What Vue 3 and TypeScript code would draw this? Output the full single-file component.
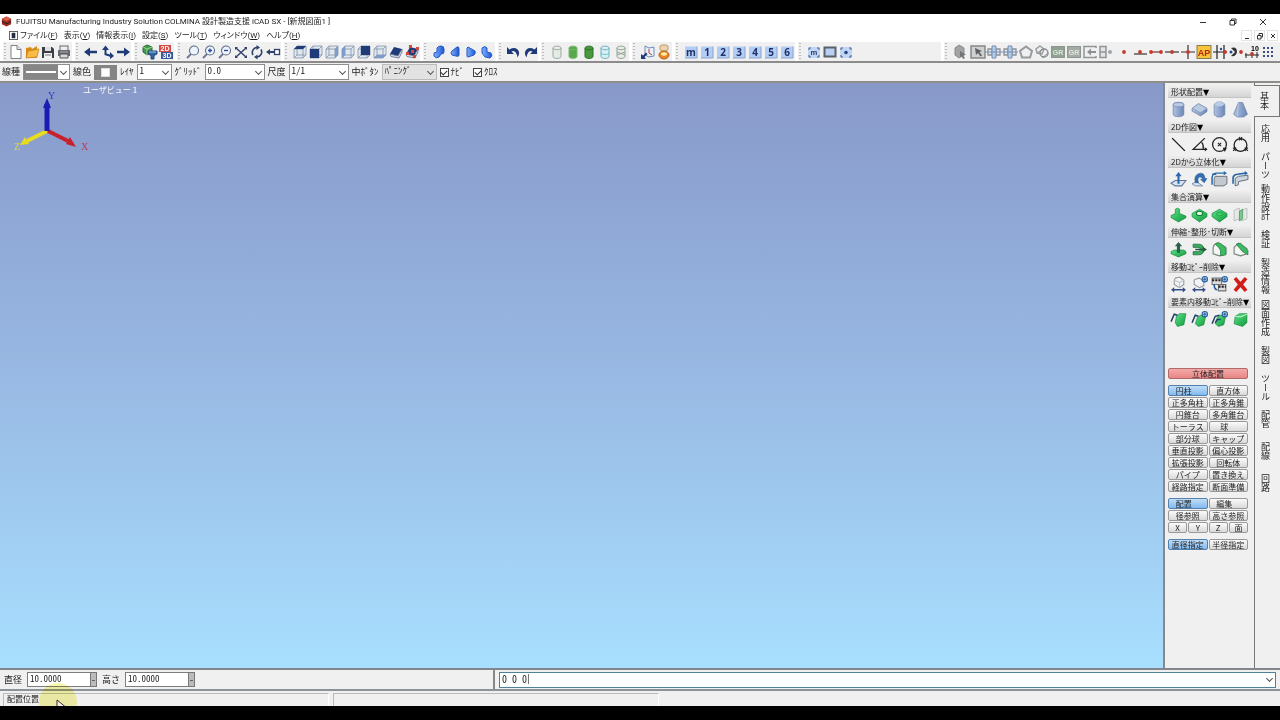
<script setup lang="ts">
import { ref } from 'vue'

const NAVY = '#1f3a78'
const RED = '#c8392b'

const cube = (part: string) => {
  const faces: Record<string, string> = {
    top: '2,5 5,2 14,2 11,5',
    front: '2,5 11,5 11,14 2,14',
    right: '11,5 14,2 14,11 11,14',
    left: '2,5 5,2 5,11 2,14',
    back: '5,2 14,2 14,11 5,11',
    bottom: '2,14 5,11 14,11 11,14',
  }
  const dark = part === 'right' || part === 'left' || part === 'bottom' ? '#7d9ccb' : NAVY
  return `<path d="M2 5L5 2H14V11L11 14H2Z" fill="#dfe8f1"/><path d="M2 5H11V14H2ZM2 5L5 2H14V11L11 14M11 5L14 2M5 2V11H14M5 11L2 14" fill="none" stroke="#8492a8" stroke-width=".8"/><polygon points="${faces[part]}" fill="${dark}"/>`
}
const lens = (inner: string) =>
  `<path d="M6.2 9.8L2 14" stroke="#66708a" stroke-width="1.8"/><circle cx="9" cy="6.5" r="4.5" fill="#eef4fb" stroke="#5c6b88" stroke-width="1.1"/>${inner}`
const cylinder = (fill: string, edge: string, extra = '') =>
  `<path d="M4 4V12.5C4 15 12 15 12 12.5V4C12 1.500 4 1.500 4 4Z" fill="${fill}" stroke="${edge}"/><path d="M4 4C4 6.300 12 6.300 12 4" fill="none" stroke="${edge}"/>${extra}`
const tile = (t: string) =>
  `<rect x="2" y="2.500" width="12" height="11.500" fill="#b4cdf6"/><path d="M2 14H14V2.500" fill="none" stroke="#8aa2cc"/><text x="8" y="12" text-anchor="middle" font-size="10" font-weight="700" font-family="Open Sans, Noto Sans, sans-serif" fill="#1d3168">${t}</text>`
const dot = (x: number, y = 8) => `<circle cx="${x}" cy="${y}" r="1.900" fill="${RED}"/>`
const frame = (inner: string) =>
  `<rect x="2" y="3" width="12" height="11" fill="#c2d5f2"/><path d="M3 6V4H5M11 4H13V6M13 11V13H11M5 13H3V11" fill="none" stroke="#46659c"/>${inner}`
const grLabel = (bg: string) =>
  `<rect x="1.500" y="2.500" width="13" height="11" fill="${bg}" stroke="#8e968e"/><text x="8" y="11" text-anchor="middle" font-size="7" font-weight="700" font-family="Liberation Sans, sans-serif" fill="#dfe6df">GR</text>`
const snapBox = `<path d="M2 5H6V11H2ZM10 5H14V11H10Z" fill="#e4e8ec" stroke="#8b9097" stroke-width="1.300"/><path d="M6 2H10V14H6Z" fill="#b5cce8" stroke="#7890b3"/><path d="M0 8H16" stroke="#7890b3"/>`

const icons: Record<string, string> = {
  file: '<path d="M3 1.500H9L13 5.500V14.500H3Z" fill="#fff" stroke="#7b7f86"/><path d="M9 1.500V5.500H13" fill="#e5e7ea" stroke="#7b7f86"/>',
  open: '<path d="M2 14V4L7 3L8 5L13 2V14Z" fill="#d98b16"/><path d="M2 14L4 7L15 5L13 13Z" fill="#f8bb45" stroke="#c87d15" stroke-width=".7"/>',
  save: '<path d="M2 3H12L14 5V14H2Z" fill="#3d3e43"/><rect x="5" y="3" width="6" height="4" fill="#dde0e6"/><rect x="4" y="9" width="8" height="5" fill="#f1f2f3"/><path d="M5 11H11" stroke="#777"/>',
  print: '<rect x="4" y="2" width="8" height="5" fill="#eee" stroke="#666"/><path d="M2 6H14V12H2Z" fill="#696b70"/><path d="M4 10H12V14H4Z" fill="#d8d8d8" stroke="#555"/><path d="M4 8H12" stroke="#aaa"/>',
  left: `<path d="M1 8L7 3.500V6.800H14V9.200H7V12.500Z" fill="${NAVY}"/>`,
  axes: `<path d="M5.500 11V6H3L6.500 1.500L10 6H7.500V9.500L11 10.500V8L15 12L11 15V12.700Z" fill="${NAVY}"/>`,
  right: `<path d="M15 8L9 3.500V6.800H2V9.200H9V12.500Z" fill="${NAVY}"/>`,
  parts: '<path d="M5 1L10 3V8L5 11L1 8V3Z" fill="#439a49" stroke="#2a6d36"/><path d="M1 3L5 5L10 3M5 5V11" fill="none" stroke="#9bd39a"/><path d="M6 7H15V10L12 11.500V15H9V11.500L6 10Z" fill="#35669c" stroke="#234a7b"/><path d="M7 8H14" stroke="#9cc2e5"/>',
  dim: '<rect x="1" y="1" width="12" height="7" fill="#d94a42"/><rect x="3" y="8" width="12" height="7" fill="#365a9e"/><text x="7" y="7.200" text-anchor="middle" font-size="7" font-weight="700" font-family="Liberation Sans, sans-serif" fill="#fff">2D</text><text x="9" y="14.200" text-anchor="middle" font-size="7" font-weight="700" font-family="Liberation Sans, sans-serif" fill="#fff">3D</text>',
  zoom: lens(''),
  zoomIn: lens('<path d="M7 6.500H11M9 4.500V8.500" stroke="#24499a" stroke-width="1.300"/>'),
  zoomOut: lens('<path d="M7 6.500H11" stroke="#24499a" stroke-width="1.300"/>'),
  fit: '<path d="M3 4L13 13M13 4L3 13" stroke="#34466e" stroke-width="1.500"/><path d="M2 3H5L2 6ZM14 3V6L11 3ZM2 14V11L5 14ZM14 14H11L14 11Z" fill="#34466e"/>',
  rotate: '<path d="M4 11A5 5 0 0 1 8 3.500M12 5.500A5 5 0 0 1 8 13" fill="none" stroke="#30416a" stroke-width="1.600"/><path d="M7.500 1L11 3.500L7.500 6ZM8.500 10.500V15.500L5 13Z" fill="#30416a"/>',
  pan: '<path d="M1 8L5 5V7H9V9H5V11Z" fill="#30416a"/><rect x="9.500" y="5.500" width="5" height="5" fill="#fff" stroke="#30416a" stroke-width="1.300"/>',
  cTop: cube('top'), cFront: cube('front'), cRight: cube('right'), cLeft: cube('left'), cBack: cube('back'), cBottom: cube('bottom'),
  cTilt: `<path d="M6 3L14 5L10 12L2 10Z" fill="${NAVY}"/><path d="M2 10L10 12L14 5V8L11 14L3 12.500Z" fill="#dae3ee" stroke="#5b6984" stroke-width=".8"/>`,
  cPoints: `<path d="M6 3L14 5L10 12L2 10Z" fill="${NAVY}"/><path d="M2 10L10 12L14 5V8L11 14L3 12.500Z" fill="#dae3ee" stroke="#5b6984" stroke-width=".8"/><path d="M5 1h3v3h-3zM12 3h3v3h-3zM2 8h3v3h-3zM9 11h3v3h-3zM7 6h3v3h-3z" fill="#d9473c"/>`,
  s1: '<path d="M6 4Q7 2 10 2Q13 2 13 5V8Q13 10 10 10L8 13Q5 15 3 12V9L6 8Z" fill="url(#solidBlue)" stroke="#2459c4"/>',
  s2: '<path d="M10 3Q12 2 12 5V11Q12 13 9 12L5 11Q3 9 5 7Z" fill="url(#solidBlue)" stroke="#2459c4"/>',
  s3: '<path d="M5 3L12 7Q13 9 11 11L5 13Q4 13 4 12V4Z" fill="url(#solidBlue)" stroke="#2459c4"/>',
  s4: '<path d="M3 4Q6 1 8 4V8L12 9Q14 12 11 14L6 13L3 9Z" fill="url(#solidBlue)" stroke="#2459c4"/>',
  undo: `<path d="M1 3V10H8L5.500 7.500Q10 5.500 11.500 13.500Q15 8 11 5Q8 3 3.500 5.500Z" fill="${NAVY}"/>`,
  redo: `<path d="M15 3V10H8L10.500 7.500Q6 5.500 4.500 13.500Q1 8 5 5Q8 3 12.500 5.500Z" fill="${NAVY}"/>`,
  y1: cylinder('#e5ece4', '#9aa99b'),
  y2: cylinder('#58a94b', '#7cb872'),
  y3: cylinder('#47993b', '#2f6e2c'),
  y4: cylinder('#d6f1f4', '#74aebc', '<path d="M4 9C4 11 12 11 12 9" fill="none" stroke="#63c4d6"/>'),
  y5: cylinder('#e8ede8', '#92a295', '<path d="M4 8L12 11M4 11L12 8" stroke="#92a295"/>'),
  view: `<path d="M5 2L9 4L14 3V12L9 13L5 11Z" fill="#e8f0fa" stroke="#6f8cb9"/><path d="M9 5V9L12 11" stroke="${RED}" fill="none"/><path d="M1 15V10L3 11.500L6 8.500L7.500 10L4.500 13L6 15Z" fill="${NAVY}"/>`,
  coin: '<rect x="4" y="1" width="8" height="6" rx="2" fill="#ecd5ae" stroke="#bf9b68"/><ellipse cx="8" cy="11" rx="5" ry="4" fill="#e98621" stroke="#b95d1d"/><ellipse cx="8" cy="10" rx="3" ry="1.700" fill="#fff0a5"/>',
  tm: tile('m'), t1: tile('1'), t2: tile('2'), t3: tile('3'), t4: tile('4'), t5: tile('5'), t6: tile('6'),
  fm: frame('<text x="8" y="10.500" text-anchor="middle" font-size="7" font-weight="700" font-family="Noto Sans, sans-serif" fill="#29477d">m</text>'),
  fw: '<rect x="2.500" y="3.500" width="11" height="9" fill="#b9d0f2" stroke="#59616c" stroke-width="2"/>',
  fd: frame('<circle cx="8" cy="8.500" r="1.800" fill="#244783"/>'),
  gCube: '<path d="M7 1L12 4V11L7 14L3 11V4Z" fill="#a1a3a4" stroke="#858789"/><path d="M8 7L14 11L11 11.500L13 14L11 15L9.500 12L8 13Z" fill="#727476"/>',
  pick: '<rect x="1" y="2" width="14" height="12" fill="#cfd0d1" stroke="#86888a" stroke-width="1.500"/><path d="M5 4L12 7L9.500 8L12 11.500L10.500 12.500L8 9L6 11Z" fill="#5e6062"/>',
  gBox: snapBox,
  penta: '<path d="M8 2.500L14 7L12 13.500H4L2 7Z" fill="none" stroke="#969a9e" stroke-width="2"/>',
  links: '<path d="M6 2L10 5L8 10L3 9L2 5Z" fill="none" stroke="#9b9ea1" stroke-width="1.500"/><circle cx="10" cy="9" r="4" fill="none" stroke="#8b8f92" stroke-width="1.500"/><path d="M3 9L9 5M8 14L14 9" stroke="#8b8f92"/>',
  gr1: grLabel('#8ea08f'), gr2: grLabel('#a5aaa7'),
  gIn: '<path d="M14 4V2.500H2V13.500H14V12" stroke="#919598" fill="none" stroke-width="1.500"/><path d="M5 8L9 4.500V7H14V9H9V11.500Z" fill="#8d9194"/>',
  gEnd: '<path d="M2 2.500H8V13.500H2ZM2 8H8" stroke="#919598" fill="#e4e4e4" stroke-width="1.500"/><circle cx="12" cy="8" r="2" fill="#a1a5a9"/>',
  p1: dot(8), p2: `<path d="M2 10H15" stroke="#333" stroke-width="1.200"/>${dot(8)}`,
  p3: `<path d="M2 8H14" stroke="#733" stroke-width="1.200"/>${dot(3)}${dot(13)}`,
  p4: `<path d="M1 8H15" stroke="#333" stroke-width="1.200"/>${dot(8)}`,
  p5: `<path d="M1 8H15M8 1V15" stroke="#333" stroke-width="1.200"/>${dot(8)}`,
  ap: '<rect x="1" y="1.500" width="14" height="13" fill="#f8c43b" stroke="#887a55"/><text x="8" y="12" text-anchor="middle" font-size="9" font-weight="700" font-family="Liberation Sans, sans-serif" fill="#b32516">AP</text>',
  p6: `<path d="M1 8H15M5 1V15M12 1V15" stroke="#222" stroke-width="1.200"/><circle cx="9" cy="5" r="1.200" fill="#264b91"/>${dot(13)}`,
  p7: `<path d="M3 4Q9 2 9 8Q8 13 3 12L7 8Z" fill="#333"/><circle cx="3" cy="8" r="1.500" fill="#244b8c"/>${dot(13)}`,
  p8: `<path d="M1 11H15M2 9V14M8 8V14M13 8V14" stroke="#222"/><text x="11" y="7" text-anchor="middle" font-size="7" font-weight="700" font-family="Liberation Sans, sans-serif">10</text>${dot(8, 10)}`,
  p9: '<path d="M3 3h2v2H3zM7 3h2v2H7zM11 3h2v2h-2zM3 7h2v2H3zM7 7h2v2H7zM11 7h2v2h-2zM3 11h2v2H3zM7 11h2v2H7zM11 11h2v2h-2z" fill="#3d4f7c"/>',

  kCyl: '<path d="M3 3.500V12.500C3 15.500 13 15.500 13 12.500V3.500C13 .500 3 .500 3 3.500Z" fill="url(#steel)" stroke="#6d83a6" stroke-width=".7"/><ellipse cx="8" cy="3.500" rx="5" ry="2" fill="#b9cbe6" stroke="#6d83a6" stroke-width=".6"/>',
  kBox: '<path d="M1 7L7 2.500L15 7V10L9 14L1 9.500Z" fill="url(#steel)" stroke="#6d83a6" stroke-width=".7"/><path d="M1 7L7 2.500L15 7L9 11Z" fill="#bacbe5" stroke="#7388ab" stroke-width=".5"/>',
  kPrism: '<path d="M3 3L6 1H10L13 3V13L10 15H6L3 13Z" fill="url(#steel)" stroke="#6d83a6" stroke-width=".7"/><path d="M3 3L6 1H10L13 3L10 5H6Z" fill="#b9cbe6"/>',
  kCone: '<path d="M6 1.500H10L14.500 12.500L11 15H5L1.500 12.500Z" fill="url(#steel)" stroke="#6d83a6" stroke-width=".7"/><path d="M6 2L5 14.500" stroke="#c5d3ea" stroke-width=".7"/>',
  line: '<path d="M2 2L14 14" stroke="#222" stroke-width="1.300"/>',
  angle: '<path d="M13 2L2 12.500H15M10 6Q12 8 11.500 12" fill="none" stroke="#222" stroke-width="1.200"/><path d="M13 10.500L15.500 12.500L13 14.500Z" fill="#222"/>',
  circ: '<circle cx="8" cy="8" r="6.500" fill="none" stroke="#222" stroke-width="1.200"/><path d="M6.500 6.500L9.500 9.500M9.500 6.500L6.500 9.500" stroke="#222"/><path d="M11 11L15 11L13 15Z" fill="#222"/>',
  circ3: '<circle cx="8" cy="8.500" r="6" fill="none" stroke="#222" stroke-width="1.200"/><path d="M6.500 1L9.500 4M9.500 1L6.500 4M1 11L4 14M4 11L1 14M12 11L15 14M15 11L12 14" stroke="#222"/>',
  extr: '<path d="M1 11.500L5 9H15L11 14H5Z" fill="#d6e5f5" stroke="#5f7794"/><path d="M8 1L11 5H9V12H7V5H5Z" fill="#2a68b0"/>',
  revol: '<path d="M1 12L5 10L11 14H4Z" fill="#d6e5f5" stroke="#5f7794" stroke-width=".7"/><path d="M4 11Q2 3 9 2Q13 2 13 7L15 7L12.500 11L9 8H11Q10 5 7 6Q6 8 7 11Z" fill="#326eb4" stroke="#28558d" stroke-width=".5"/>',
  sheet: '<path d="M4 5H15V12L12 14H3V7Z" fill="#c4c9ce" stroke="#59626c" stroke-width=".8"/><path d="M1 13V6Q2 2 5 2H13M1 3H5" fill="none" stroke="#2567a8" stroke-width="1.400"/><path d="M12 0L15 2L12 4Z" fill="#2567a8"/>',
  sheet2: '<path d="M3 7L6 5L15 4V8L6 10V13L3 14Z" fill="#cdd6de" stroke="#4e6073" stroke-width=".8"/><path d="M1 12V6Q2 3 5 3L13 2" fill="none" stroke="#2567a8" stroke-width="1.500"/><path d="M12 0L15 2L12 4Z" fill="#2567a8"/>',
  uni: '<path d="M5 3Q7 1 9 3V7L15 9.500V11L8 15L1 11V9L5 7Z" fill="url(#solidGreen)" stroke="#128338" stroke-width=".6"/>',
  sub: '<path d="M1 7L8 3L15 7V10L8 15L1 10Z" fill="url(#solidGreen)" stroke="#128338" stroke-width=".6"/><ellipse cx="8" cy="7" rx="3" ry="2" fill="#e5f3e8" stroke="#128338"/>',
  inter: '<path d="M1 7L8 3L15 7V10L8 15L1 10Z" fill="url(#solidGreen)" stroke="#128338" stroke-width=".6"/><ellipse cx="8" cy="7.500" rx="3" ry="1.500" fill="#3dd368" stroke="#168b3c" stroke-width=".5"/>',
  split: '<path d="M2 4L7 2V12L2 14ZM9 4L14 2V12L9 14Z" fill="#e6e9e6" stroke="#b5bab7" stroke-width=".8"/><path d="M7 5L10 3V12L7 14Z" fill="#7ac790" stroke="#559b69" stroke-width=".8"/>',
  stretch: '<path d="M1 10L4 8.500H13L15 10V12L8 15L1 12Z" fill="url(#solidGreen)" stroke="#167c35" stroke-width=".6"/><path d="M8 1L11.500 5H9.500V11H6.500V5H4.500Z" fill="#28624a"/>',
  shape: '<path d="M2 3H7Q12 3 12 8Q12 13 7 13H2V10H6Q9 10 9 8Q9 6 6 6H2Z" fill="#35ad5a" stroke="#286343" stroke-width=".7"/><path d="M4 8H11" stroke="#245a3c" stroke-width="1.400"/><path d="M11 5.500L15 8L11 10.500Z" fill="#245a3c"/>',
  fillet: '<path d="M2 6Q3 2 7 2L14 6V12L8 14L2 12Z" fill="#f4f6f4" stroke="#778079"/><path d="M4 3Q7 0 11 4L14 7V13L9 14V9Q8 6 4 3Z" fill="#39bd61" stroke="#2c7642" stroke-width=".7"/>',
  chamfer: '<path d="M2 6L6 2L14 7V12L8 14L2 12Z" fill="#f4f6f4" stroke="#778079"/><path d="M4 3L8 2L15 9V13L10 10Z" fill="#39bd61" stroke="#2c7642" stroke-width=".7"/>',
  move: '<path d="M5 2L9 1L13 4V8L9 11L4 8V4Z" fill="#f2f3f4" stroke="#92979d"/><path d="M4 4L9 6L13 4M9 6V11" fill="none" stroke="#c2c5c8"/><path d="M1 13L4 10.500V12.300H12V10.500L15 13L12 15.500V13.700H4V15.500Z" fill="#334c87"/>',
  copy: '<path d="M4 3L8 2L12 5V9L8 11L3 8V4Z" fill="#f2f3f4" stroke="#92979d"/><path d="M1 13L4 10.500V12.300H11V10.500L14 13L11 15.500V13.700H4V15.500Z" fill="#334c87"/><circle cx="13" cy="3" r="2.500" fill="#b8d8f1" stroke="#235d9b"/><path d="M11.500 3H14.500M13 1.500V4.500" stroke="#235d9b"/>',
  multi: '<path d="M1 2H10V8H1ZM7 8H14V14H7Z" fill="#ddd" stroke="#6f7275"/><path d="M1 4H10M7 10H14" stroke="#222" stroke-dasharray="2 1" stroke-width="2"/><path d="M3 8Q3 13 6 13" fill="none" stroke="#25549a" stroke-width="1.500"/><circle cx="13" cy="3" r="2.500" fill="#b8d8f1" stroke="#235d9b"/><path d="M11.500 3H14.500M13 1.500V4.500" stroke="#235d9b"/>',
  del: '<path d="M1.500 3L4 1L8 5.500L12 1L14.500 3L10.500 8L14.500 13L12 15L8 10.500L4 15L1.500 13L5.500 8Z" fill="#cf1e1a"/>',
  m1: '<path d="M6 5L9 2.500H15L13 13L7 14.500L5 11Z" fill="url(#solidGreen)" stroke="#158239" stroke-width=".6"/><path d="M1 10L4 3L7 4" fill="none" stroke="#213d66" stroke-width="1.400"/>',
  m2: '<path d="M6 6L9 4H14L12 13L7 14.500L4 12Z" fill="url(#solidGreen)" stroke="#158239" stroke-width=".6"/><path d="M1 11L4 4L7 5" fill="none" stroke="#213d66" stroke-width="1.400"/><circle cx="13" cy="3" r="2.500" fill="#b8d8f1" stroke="#235d9b"/><path d="M11.500 3H14.500M13 1.500V4.500" stroke="#235d9b"/>',
  m3: '<path d="M6 6L9 4H14L12 13L7 14.500L4 12Z" fill="url(#solidGreen)" stroke="#158239" stroke-width=".6"/><path d="M1 12L4 5L8 4M4 11L6 8H9" fill="none" stroke="#213d66" stroke-width="1.400"/><circle cx="13" cy="3" r="2.500" fill="#b8d8f1" stroke="#235d9b"/><path d="M11.500 3H14.500M13 1.500V4.500" stroke="#235d9b"/>',
  m4: '<path d="M3 5L7 2.500H14V11L10 14.500L2 12Z" fill="url(#solidGreen)" stroke="#158239" stroke-width=".6"/><path d="M3 5L8 5.500L14 3" fill="none" stroke="#b4f2c3"/>',
}

const menus = [
  ['ファイル', 'F'], ['表示', 'V'], ['情報表示', 'I'], ['設定', 'S'], ['ツール', 'T'], ['ウィンドウ', 'W'], ['ヘルプ', 'H'],
]
const toolGroups = [
  ['file', 'open', 'save', 'print'],
  ['left', 'axes', 'right'],
  ['parts', 'dim'],
  ['zoom', 'zoomIn', 'zoomOut', 'fit', 'rotate', 'pan'],
  ['cTop', 'cFront', 'cRight', 'cLeft', 'cBack', 'cBottom', 'cTilt', 'cPoints'],
  ['s1', 's2', 's3', 's4'],
  ['undo', 'redo'],
  ['y1', 'y2', 'y3', 'y4', 'y5'],
  ['view', 'coin'],
  ['tm', 't1', 't2', 't3', 't4', 't5', 't6'],
  ['fm', 'fw', 'fd'],
]
const snapGroups = [
  ['gCube'],
  ['pick', 'gBox', 'gBox', 'penta', 'links', 'gr1', 'gr2', 'gIn', 'gEnd'],
  ['p1', 'p2', 'p3', 'p4', 'p5', 'ap', 'p6', 'p7', 'p8', 'p9'],
]
const sections = [
  { title: '形状配置', items: ['kCyl', 'kBox', 'kPrism', 'kCone'] },
  { title: '2D作図', items: ['line', 'angle', 'circ', 'circ3'] },
  { title: '2Dから立体化', items: ['extr', 'revol', 'sheet', 'sheet2'] },
  { title: '集合演算', items: ['uni', 'sub', 'inter', 'split'] },
  { title: '伸縮･整形･切断', items: ['stretch', 'shape', 'fillet', 'chamfer'] },
  { title: '移動ｺﾋﾟｰ削除', items: ['move', 'copy', 'multi', 'del'] },
  { title: '要素内移動ｺﾋﾟｰ削除', items: ['m1', 'm2', 'm3', 'm4'] },
]
const shapes = [
  '円柱', '直方体', '正多角柱', '正多角錐', '円錐台', '多角錐台', 'トーラス', '球', '部分球', 'キャップ',
  '垂直投影', '偏心投影', '拡張投影', '回転体', 'パイプ', '置き換え', '経路指定', '断面準備',
]
const lean = ['円柱', '球', '配置', '編集']
const tabs = ['基本', '応用', 'パーツ', '動作設計', '検証', '製造情報', '図面作成', '製図', 'ツール', '配管', '配線', '回路']

const shape = ref('円柱')
const mode = ref('配置')
const size = ref('直径指定')
const tab = ref('基本')
const navi = ref(true)
const cross = ref(true)
const diameter = ref('10.0000')
const height = ref('10.0000')
const command = ref('0 0 0')
</script>

<template>
  <div class="screen">
    <svg class="defs" aria-hidden="true">
      <defs>
        <linearGradient id="solidBlue"><stop offset="0" stop-color="#7fb2ff" /><stop offset="1" stop-color="#1f55d2" /></linearGradient>
        <linearGradient id="solidGreen" x2="1" y2="1"><stop offset="0" stop-color="#5be286" /><stop offset="1" stop-color="#119a3d" /></linearGradient>
        <linearGradient id="steel"><stop offset="0" stop-color="#b0c3e2" /><stop offset="1" stop-color="#6a86b6" /></linearGradient>
      </defs>
    </svg>
    <div class="app">
      <header class="title">
        <svg class="logo" viewBox="0 0 12 12"><path d="M1 3L6 0.500L11 3V9L6 11.500L1 9Z" fill="#a52c22" /><path d="M1 3L6 0.500L11 3L6 5.500Z" fill="#d6604e" /><path d="M1 6L6 8.500L11 6" fill="none" stroke="#3a2422" stroke-width="1.500" /></svg>
        <h1>FUJITSU Manufacturing Industry Solution COLMINA 設計製造支援 iCAD SX - [新規図面1 ]</h1>
        <div class="winbtns">
          <button aria-label="最小化"><svg viewBox="0 0 8 8"><path d="M1 4.500H7" /></svg></button>
          <button aria-label="元に戻す"><svg viewBox="0 0 8 8"><path d="M1 2.500H5.500V7H1ZM2.500 2.500V1H7V5.500H5.500" /></svg></button>
          <button aria-label="閉じる"><svg viewBox="0 0 8 8"><path d="M1 1L7 7M7 1L1 7" /></svg></button>
        </div>
      </header>

      <nav class="menu">
        <svg class="doc" viewBox="0 0 10 10"><rect x=".5" y=".5" width="9" height="9" fill="#fff" stroke="#555" /><rect x="3" y="2" width="4" height="6" fill="#222e40" /></svg>
        <button v-for="m in menus" :key="m[1]">{{ m[0] }}(<u>{{ m[1] }}</u>)</button>
        <div class="docbtns">
          <button aria-label="図面を最小化"><svg viewBox="0 0 8 8"><path d="M2 6.500H6" /></svg></button>
          <button aria-label="図面を元に戻す"><svg viewBox="0 0 8 8"><path d="M1.500 3.500H5V7H1.500ZM3 3.500V1.500H6.500V5H5" /></svg></button>
          <button aria-label="図面を閉じる"><svg viewBox="0 0 8 8"><path d="M2 2L6 6M6 2L2 6" /></svg></button>
        </div>
      </nav>

      <div class="tools">
        <div v-for="(g, i) in toolGroups" :key="i" class="group">
          <button v-for="n in g" :key="n" class="tool" :aria-label="n"><svg viewBox="0 0 16 16" v-html="icons[n]" /></button>
        </div>
        <div class="snaps">
          <div v-for="(g, i) in snapGroups" :key="i" class="snapgroup">
            <button v-for="(n, j) in g" :key="j" class="tool" :aria-label="n"><svg viewBox="0 0 16 16" v-html="icons[n]" /></button>
          </div>
        </div>
      </div>

      <div class="props">
        <label for="ltype">線種</label>
        <span class="combo ltype"><select id="ltype"><option></option></select></span>
        <label for="lcolor">線色</label>
        <button id="lcolor" class="swatch"><i></i></button>
        <label for="layer">ﾚｲﾔ</label>
        <span class="combo layer"><select id="layer"><option>1</option></select></span>
        <label for="grid">ｸﾞﾘｯﾄﾞ</label>
        <span class="combo wide"><select id="grid"><option>0.0</option></select></span>
        <label for="scale">尺度</label>
        <span class="combo wide"><select id="scale"><option>1/1</option></select></span>
        <label for="mid">中ﾎﾞﾀﾝ</label>
        <span class="combo mid"><select id="mid"><option>ﾊﾟﾆﾝｸﾞ</option></select></span>
        <label class="check"><input v-model="navi" type="checkbox" />ﾅﾋﾞ</label>
        <label class="check"><input v-model="cross" type="checkbox" />ｸﾛｽ</label>
      </div>

      <main class="work">
        <section class="canvas">
          <svg class="triad" viewBox="0 0 80 64">
            <path d="M37 41L17 51" stroke="#e8dc1c" stroke-width="4" /><path d="M10 55L15 47L19 54Z" fill="#e8dc1c" />
            <path d="M38 41L60 52" stroke="#c9202c" stroke-width="4" /><path d="M66 57L56 54L60 47Z" fill="#c9202c" />
            <path d="M37 41V14" stroke="#1c1cb4" stroke-width="5" /><path d="M37 8L41 18H33Z" fill="#1c1cb4" />
            <text x="38" y="9" fill="#3038c0">Y</text><text x="71" y="60" fill="#c43850">X</text><text x="4" y="60" fill="#dcd84a">Z</text>
          </svg>
          <span class="viewname">ユーザビュー 1</span>
        </section>

        <aside class="panel">
          <div class="sections">
            <section v-for="s in sections" :key="s.title">
              <h2>{{ s.title }}<span>▼</span></h2>
              <div class="icons">
                <button v-for="n in s.items" :key="n" :aria-label="n"><svg viewBox="0 0 16 16" v-html="icons[n]" /></button>
              </div>
            </section>
          </div>
          <div class="commands">
            <button class="cmd heading">立体配置</button>
            <div class="pair">
              <button v-for="s in shapes" :key="s" class="cmd" :class="{ on: shape === s, lean: lean.includes(s) }" @click="shape = s">{{ s }}</button>
            </div>
            <div>
              <div class="pair">
                <button v-for="s in ['配置', '編集']" :key="s" class="cmd lean" :class="{ on: mode === s }" @click="mode = s">{{ s }}</button>
                <button class="cmd">径参照</button>
                <button class="cmd">高さ参照</button>
              </div>
              <div class="quad">
                <button v-for="s in ['X', 'Y', 'Z', '面']" :key="s" class="cmd">{{ s }}</button>
              </div>
            </div>
            <div class="pair">
              <button v-for="s in ['直径指定', '半径指定']" :key="s" class="cmd" :class="{ on: size === s }" @click="size = s">{{ s }}</button>
            </div>
          </div>
        </aside>

        <nav class="tabs">
          <button v-for="t in tabs" :key="t" :class="{ active: tab === t, long: t.length > 3 }" @click="tab = t">{{ t }}</button>
        </nav>
      </main>

      <div class="entry">
        <div class="values">
          <label for="dia">直径</label>
          <span class="spin"><input id="dia" v-model="diameter" /><button aria-label="直径の候補">-</button></span>
          <label for="hei">高さ</label>
          <span class="spin"><input id="hei" v-model="height" /><button aria-label="高さの候補">-</button></span>
        </div>
        <div class="command">
          <input v-model="command" aria-label="コマンド入力" />
          <i class="caret"></i>
        </div>
      </div>

      <footer class="status">
        <span class="cell">配置位置</span>
        <span class="cell"></span>
        <div class="pointer">
          <svg viewBox="0 0 10 12"><path d="M1 1V11L4 8L6 12H8L6 7.500H9Z" fill="#fff" stroke="#3a2a2a" /></svg>
        </div>
      </footer>
    </div>
  </div>
</template>

<style>
body { background: #000; }
</style>

<style scoped>
* { box-sizing: border-box; }
.screen {
  min-height: 100vh;
  display: flex;
  flex-direction: column;
  padding: 14px 0;
  background: #000;
  color: #222;
  font: 10px/12px "Noto Sans CJK JP", sans-serif;
}
.defs { position: absolute; width: 0; height: 0; }
button { border: 0; padding: 0; margin: 0; background: none; font: inherit; color: inherit; }
input, select { font: inherit; color: inherit; margin: 0; }
svg { display: block; }
.app { flex: 1; display: flex; flex-direction: column; background: #f0f0f0; overflow: hidden; }

.title { height: 15px; display: flex; align-items: center; gap: 4px; padding: 0 13px 0 1px; background: #fff; }
.logo { width: 11px; height: 11px; }
h1 { flex: 1; margin: 0; font: 400 8px/14px Roboto, "Noto Sans CJK JP", sans-serif; white-space: nowrap; }
.winbtns { display: flex; gap: 22px; }
.winbtns svg { width: 8px; height: 8px; }
.winbtns path, .docbtns path { fill: none; stroke: #333; stroke-width: 1; }

.menu { height: 13px; display: flex; align-items: center; gap: 6px; padding: 0 2px 0 9px; background: #fff; font: 8px/12px Roboto, "Noto Sans CJK JP", sans-serif; font-feature-settings: "palt"; white-space: nowrap; }
.menu .doc { width: 9px; height: 9px; margin-right: -4px; }
.docbtns { margin-left: auto; display: flex; gap: 2px; }
.docbtns button { width: 11px; height: 11px; display: grid; place-items: center; border: 1px solid #e4e4e4; }
.docbtns svg { width: 8px; height: 8px; }

.tools { height: 21px; display: flex; align-items: center; padding: 0 4px 0 0; border-bottom: 2px solid #8b8b8b; background: #f0f0f0; }
.group, .snaps { display: flex; padding-left: 11px; height: 19px; align-items: center; background: linear-gradient(90deg, #fff, #fff) 0 0 / 3px 100% no-repeat, radial-gradient(circle, #bbb 1px, transparent 1px) 3px 0 / 4px 3px repeat-y; }
.group:first-child { padding-left: 8px; }
.snaps { margin-left: auto; gap: 2px; }
.snapgroup { display: flex; }
.tool, .tool svg { width: 16px; height: 16px; }

.props { height: 20px; display: flex; align-items: center; gap: 3px; padding-left: 2px; border-bottom: 2px solid #8d8d8a; white-space: nowrap; font-size: 9px; }
.combo { position: relative; height: 16px; }
.combo::after { content: ""; position: absolute; right: 4px; top: 5px; width: 4px; height: 4px; border: solid #555; border-width: 0 1px 1px 0; transform: rotate(45deg); pointer-events: none; }
.combo select { appearance: none; display: block; width: 100%; height: 16px; padding: 0 12px 2px 2px; border: 1px solid #8e8e8e; border-radius: 0; background: #fff; line-height: 12px; font-feature-settings: "hwid"; }
.ltype { width: 47px; }
.ltype select { background: linear-gradient(#fff, #fff) 2px 6px / 30px 2px no-repeat, linear-gradient(#868686, #868686) 0 0 / 34px 100% no-repeat, #fff; }
.swatch { width: 23px; height: 15px; display: grid; place-items: center; background: #858585; }
.swatch i { width: 9px; height: 9px; background: #fff; border: 1px solid #ddd; }
.layer { width: 35px; }
.wide { width: 60px; }
.mid { width: 55px; }
.mid select { background: #e2e2e2; border-color: #bbb; }
.check { display: flex; align-items: center; gap: 2px; margin-right: 6px; }
.check input { appearance: none; width: 9px; height: 9px; border: 1px solid #444; background: #fff; display: grid; place-items: center; }
.check input:checked::after { content: ""; width: 3px; height: 5px; margin-top: -1px; border: solid #333; border-width: 0 1px 1px 0; transform: rotate(45deg); }

.work { flex: 1; display: flex; min-height: 0; }
.canvas { flex: 1; position: relative; background: linear-gradient(#8899c9, #98b9e3 50%, #a8dfff); }
.triad { position: absolute; left: 10px; top: 7px; width: 80px; height: 64px; font: 10px "Liberation Serif", serif; }
.viewname { position: absolute; left: 83px; top: 1px; color: #fff; font-size: 8px; line-height: 12px; }

.panel { width: 91px; border-left: 2px solid #85898f; padding: 2px 3px 0 3px; background: #f0f0f0; }
.sections { height: 243px; display: flex; flex-direction: column; }
.sections section { flex: 1; }
h2 { margin: 1px 0 0; height: 12px; padding-left: 3px; border-bottom: 1px solid #c4c4c4; background: linear-gradient(#eee, #d4d4d4); font: 400 8px/11px "Noto Sans CJK JP", sans-serif; font-feature-settings: "palt"; white-space: nowrap; }
h2 span { font: 8px/11px "DejaVu Sans", sans-serif; color: #000; }
.icons { display: grid; grid-template-columns: repeat(4, 1fr); height: 22px; align-items: center; justify-items: center; }
.icons svg { width: 17px; height: 17px; }
.commands { margin-top: 40px; padding: 0 3px 0 0; display: flex; flex-direction: column; gap: 6px; }
.pair { display: grid; grid-template-columns: 1fr 1fr; gap: 1px; }
.quad { display: grid; grid-template-columns: repeat(4, 1fr); gap: 1px; margin-top: 1px; }
.cmd { height: 11px; border: 1px solid #999; border-radius: 2px; background: linear-gradient(#fbfbfb, #d9d9d9); font-size: 8px; line-height: 9px; white-space: nowrap; overflow: hidden; }
.cmd.lean { padding-right: 8px; }
.cmd.on { background: linear-gradient(#c0def8, #82baf0); border-color: #5281b0; }
.cmd.heading { background: linear-gradient(#f4a9a9, #e78585); border-color: #b06a6a; }

.tabs { width: 26px; display: flex; flex-direction: column; padding-top: 2px; border-left: 1px solid #777; }
.tabs button { height: 32px; padding-right: 5px; writing-mode: vertical-rl; display: flex; align-items: center; justify-content: center; font-size: 9px; line-height: 20px; }
.tabs .long { height: 42px; }
.tabs .active { margin-left: -1px; border: 1px solid #777; border-left: 0; background: #f0f0f0; }

.entry { height: 23px; display: flex; border-top: 2px solid #80868c; border-bottom: 2px solid #8b9298; }
.values { width: 495px; display: flex; align-items: center; gap: 5px; padding-left: 4px; border-right: 2px solid #888; font-size: 9px; }
.spin { display: flex; height: 15px; font-feature-settings: "hwid"; }
.spin input { width: 63px; height: 15px; border: 1px solid #7d7d7d; border-right: 0; background: #fff; padding: 0 2px 2px; }
.spin button { width: 7px; height: 15px; border: 1px solid #777; background: #bbb; line-height: 12px; }
.command { position: relative; flex: 1; display: flex; align-items: center; padding: 0 4px; }
.command::after { content: ""; position: absolute; right: 8px; top: 6px; width: 4px; height: 4px; border: solid #555; border-width: 0 1px 1px 0; transform: rotate(45deg); }
.command input { width: 100%; height: 16px; border: 1px solid #4d8296; background: #fff; padding: 0 2px 2px; font-size: 10px; font-feature-settings: "hwid"; }
.caret { position: absolute; left: 33px; top: 4px; width: 1px; height: 10px; background: #777; }

.status { position: relative; height: 15px; display: flex; gap: 4px; padding: 2px 0 0 3px; font-size: 8px; line-height: 10px; }
.cell { width: 326px; padding-left: 3px; border: 1px solid #bbb; border-right-color: #fff; border-bottom: 0; }
.pointer { position: absolute; left: 39px; top: -8px; width: 38px; height: 38px; border-radius: 50%; background: rgba(240, 240, 90, .5); mix-blend-mode: multiply; }
.pointer svg { position: absolute; left: 17px; top: 16px; width: 10px; height: 12px; }
</style>
